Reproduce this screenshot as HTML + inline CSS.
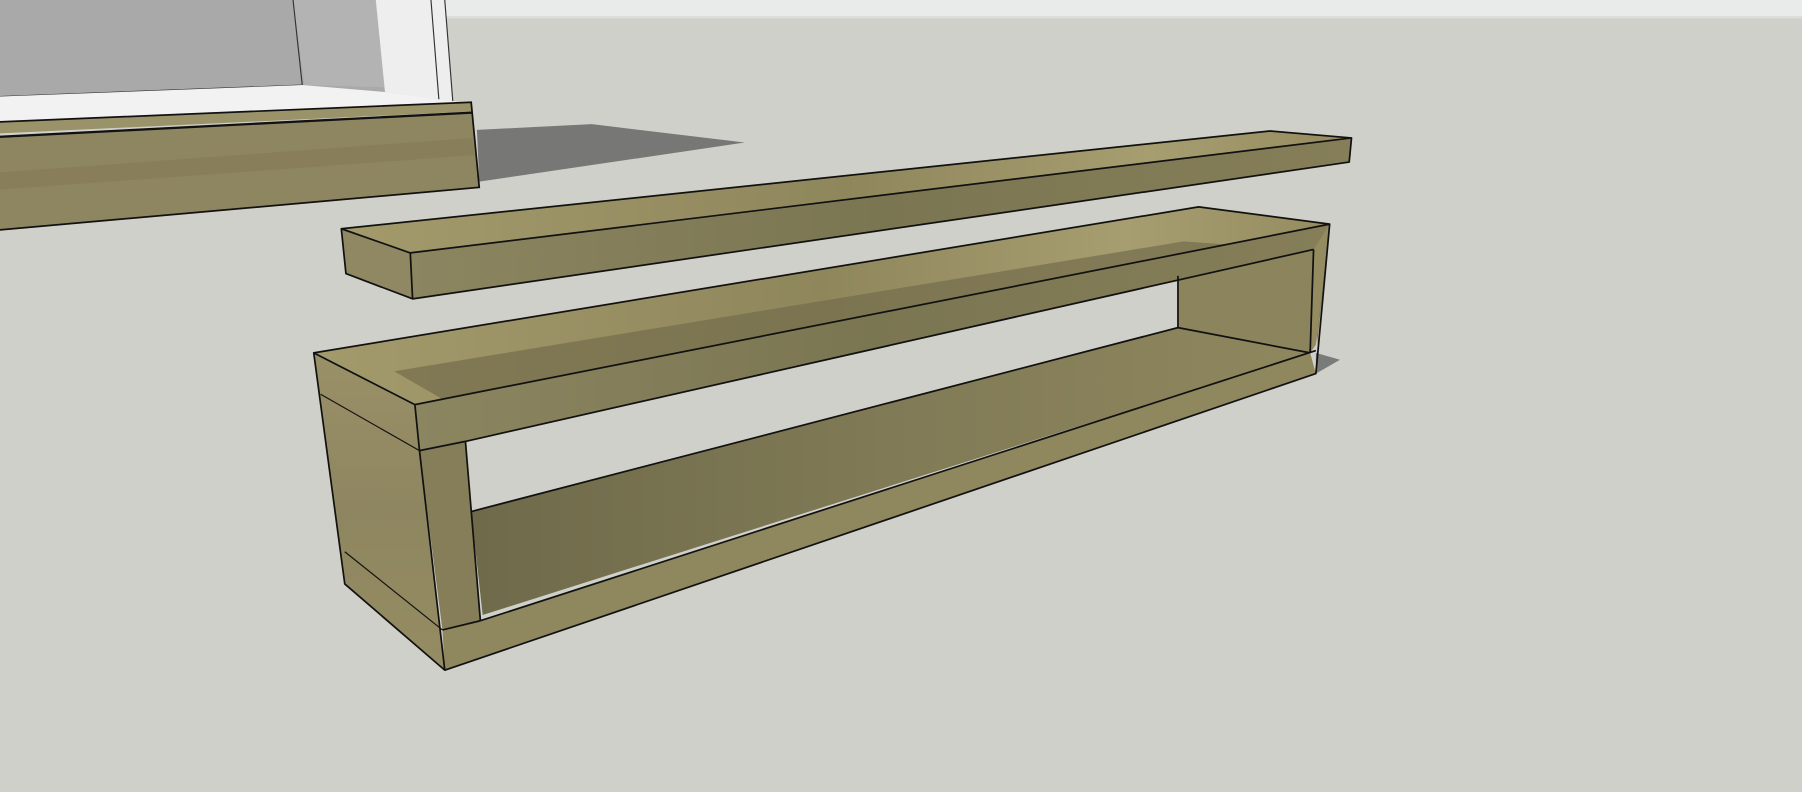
<!DOCTYPE html>
<html><head><style>
html,body{margin:0;padding:0;background:#cfd0ca;overflow:hidden}
svg{display:block}
</style></head><body>
<svg width="1802" height="792" viewBox="0 0 1568 689" preserveAspectRatio="none" xmlns="http://www.w3.org/2000/svg">
<defs>
<linearGradient id="gTop" x1="0" y1="0" x2="1" y2="0">
<stop offset="0" stop-color="#a39a6c"/><stop offset="0.5" stop-color="#8f875c"/><stop offset="0.8" stop-color="#a69d70"/><stop offset="1" stop-color="#958c60"/>
</linearGradient>
<linearGradient id="gFront" x1="0" y1="0" x2="1" y2="0">
<stop offset="0" stop-color="#8b8560"/><stop offset="0.5" stop-color="#7b7652"/><stop offset="1" stop-color="#857e58"/>
</linearGradient>
<linearGradient id="gFloor" x1="0" y1="0" x2="1" y2="0">
<stop offset="0" stop-color="#6f6a4a"/><stop offset="0.5" stop-color="#807a56"/><stop offset="1" stop-color="#8f875e"/>
</linearGradient>
<linearGradient id="gLeg" x1="0" y1="0" x2="0" y2="1">
<stop offset="0" stop-color="#9a9068"/><stop offset="0.5" stop-color="#8e8660"/><stop offset="1" stop-color="#958c62"/>
</linearGradient>
</defs>
<rect width="1568" height="689" fill="#cfd0ca"/>
<rect x="387" y="0" width="1181" height="15" fill="#e9eaea"/>
<rect x="387" y="14" width="1181" height="2" fill="#dcdcda"/>
<!-- left object -->
<polygon points="0,0 330,0 335,80 0,84" fill="#a9a9a9"/>
<polygon points="255,0 330,0 335,76 265,74" fill="#b3b3b3"/>
<polyline points="255,0 263,74 0,84" fill="none" stroke="#333" stroke-width="1"/>
<polygon points="327,0 387,0 394,88 335,80" fill="#eeeeee"/>
<line x1="375" y1="0" x2="382" y2="88" stroke="#333" stroke-width="1"/>
<line x1="387" y1="0" x2="394" y2="88" stroke="#333" stroke-width="1"/>
<polygon points="0,84 263,74 335,80 394,88 410,90 0,108" fill="#f2f2f2"/>
<polygon points="0,106 410,89 411,97 0,116" fill="#9a9268"/>
<polygon points="415,113 515,108 648,124 417,158" fill="#777776"/>
<polygon points="0,120 411,97 417,163 0,200" fill="#8e8660"/>
<polygon points="0,150 411,120 413,135 0,165" fill="#847c56" opacity="0.6"/>
<polyline points="0,106 410,89 417,163 0,200" fill="none" stroke="#111" stroke-width="1.5"/>
<line x1="0" y1="119" x2="411" y2="98" stroke="#111" stroke-width="2"/>
<!-- top plank -->
<polygon points="297,199 1105,114 1176,120 357,220" fill="url(#gTop)"/>
<polygon points="357,220 1176,120 1174,141 359,260" fill="url(#gFront)"/>
<polygon points="297,199 357,220 359,260 301,238" fill="#8f8862"/>
<g fill="none" stroke="#111" stroke-width="1.5" stroke-linejoin="round">
<polygon points="297,199 1105,114 1176,120 1174,141 359,260 301,238"/>
<polyline points="297,199 357,220 1176,120"/>
<line x1="357" y1="220" x2="359" y2="260"/>
</g>
<!-- shadow right -->
<polygon points="1145,307 1166,313 1145,325" fill="#7a7a78"/>
<!-- frame -->
<polygon points="1025,240 1143,217 1140,307 1025,285" fill="#8c845c"/>
<polygon points="410,445 1025,285 1140,307 420,535" fill="url(#gFloor)"/>
<polygon points="273,307 1043,180 1157,195 361,352" fill="url(#gTop)"/>
<polygon points="343,323 1030,210 1140,218 395,353" fill="#736c4b" opacity="0.7"/>
<polygon points="361,352 1157,195 1146,300 1143,217 405,384 365,392" fill="url(#gFront)"/>
<polygon points="1143,217 1157,195 1145,300 1140,307" fill="#948b60"/>
<polygon points="273,307 361,352 387,583 300,508" fill="url(#gLeg)"/>
<polygon points="365,392 405,384 418,540 385,548" fill="#857e58"/>
<polygon points="385,548 420,540 1140,307 1145,325 387,583" fill="#8f875d"/>
<g fill="none" stroke="#111" stroke-width="1.5" stroke-linejoin="round">
<polygon points="273,307 1043,180 1157,195 1145,325 387,583 300,508"/>
<polyline points="273,307 361,352 1157,195"/>
<line x1="361" y1="352" x2="365" y2="392"/>
<polyline points="1143,217 405,384 365,392 387,583"/>
<line x1="405" y1="384" x2="418" y2="540"/>
<line x1="385" y1="548" x2="418" y2="540"/>
<polyline points="418,540 1145,305"/>
<polyline points="410,445 1025,285 1140,307"/>
<line x1="1025" y1="240" x2="1025" y2="285"/>
<line x1="1143" y1="217" x2="1140" y2="307"/>
</g>
<line x1="279" y1="343" x2="365" y2="392" stroke="#111" stroke-width="1"/>
<line x1="300" y1="480" x2="385" y2="548" stroke="#111" stroke-width="1"/>
</svg>
</body></html>
